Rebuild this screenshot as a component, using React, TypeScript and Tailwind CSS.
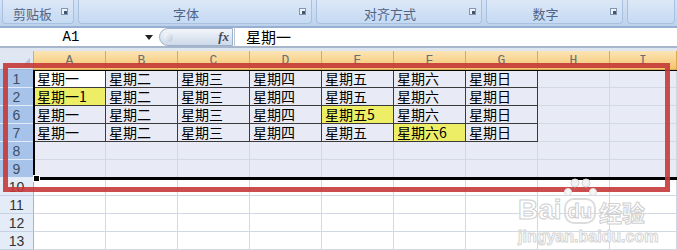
const COLS = ["A", "B", "C", "D", "E", "F", "G", "H", "I"];
const DAYS = ["星期一", "星期二", "星期三", "星期四", "星期五", "星期六", "星期日"];

type Row = { label: string; cells: string[]; yellow?: number; selected: boolean; data: boolean };

const rows: Row[] = [
    { label: "1", cells: DAYS, selected: true, data: true },
    { label: "2", cells: ["星期一1", ...DAYS.slice(1)], yellow: 0, selected: true, data: true },
    { label: "6", cells: [...DAYS.slice(0, 4), "星期五5", ...DAYS.slice(5)], yellow: 4, selected: true, data: true },
    { label: "7", cells: [...DAYS.slice(0, 5), "星期六6", DAYS[6]], yellow: 5, selected: true, data: true },
    { label: "8", cells: [], selected: true, data: false },
    { label: "9", cells: [], selected: true, data: false },
    { label: "10", cells: [], selected: false, data: false },
    { label: "11", cells: [], selected: false, data: false },
    { label: "12", cells: [], selected: false, data: false },
    { label: "13", cells: [], selected: false, data: false },
];

const groups = [
    { name: "剪贴板", w: "w-[72px]", justify: "justify-start pl-[10px]" },
    { name: "字体", w: "w-[234px]", justify: "justify-center pr-[18px]" },
    { name: "对齐方式", w: "w-[166px]", justify: "justify-center pr-[18px]" },
    { name: "数字", w: "w-[137px]", justify: "justify-center pr-[18px]" },
    { name: "", w: "flex-1", justify: "" },
];

const Launcher = () => (
    <span className="absolute right-[5px] top-[8px] w-[7px] h-[7px] border border-[#8296b4] bg-[#eef3fa]">
        <span className="absolute right-0 bottom-0 w-[3px] h-[3px] bg-[#44546e]" />
    </span>
);

export default function App() {
    return (
        <div className="relative w-[677px] h-[250px] overflow-hidden bg-white" style={{ fontFamily: '"Noto Sans CJK SC", "Liberation Sans", sans-serif' }}>
            {/* ribbon */}
            <div className="h-[28px] flex gap-[4px] px-[2px] bg-gradient-to-b from-[#d5e3f4] to-[#bed2ec] border-b-2 border-[#96afd2]">
                {groups.map((g, i) => (
                    <div
                        key={i}
                        className={`${g.w} relative h-[24px] rounded-b-[4px] border-x border-b border-[#a9c1e0] bg-gradient-to-b from-[#dce8f7] to-[#c6daf2] flex items-center ${g.justify}`}
                    >
                        <span className="text-[13px] text-[#4f6488] leading-none mt-[3px]">{g.name}</span>
                        {g.name && <Launcher />}
                    </div>
                ))}
            </div>

            {/* formula bar */}
            <div className="h-[20px] flex items-center bg-white border-b-2 border-[#a7b6cb]">
                <div className="w-[142px] text-center text-[14px] text-black" style={{ fontFamily: '"Liberation Mono", monospace' }}>A1</div>
                <svg width="8" height="5" className="ml-[3px]">
                    <polygon points="0,0 8,0 4,5" fill="#222" />
                </svg>
                <div className="ml-[6px] w-[74px] h-[18px] rounded-l-full border border-[#9db0cb] bg-gradient-to-b from-[#f3f6fb] to-[#cdd9ea] flex items-center justify-between pl-[4px] pr-[3px]">
                    <span className="w-[9px] h-[9px] rounded-full bg-gradient-to-br from-white to-[#b9c6d8]" />
                    <span className="text-[13px] italic font-bold text-[#404a5a]" style={{ fontFamily: '"Liberation Serif", serif' }}>fx</span>
                </div>
                <div className="h-[20px] border-l border-[#b9c5d6] ml-[1px] pl-[11px] text-[15px] text-black leading-[20px]">星期一</div>
            </div>

            <div className="h-[3px] bg-[#dfe6f0]" />

            {/* grid */}
            <div className="flex flex-col">
                <div className="flex h-[19px]">
                    <div className="w-[34px] shrink-0 bg-[#dfe7f2] border-r border-b border-[#9eb6ce] relative">
                        <svg width="8" height="8" className="absolute right-[3px] bottom-[3px]">
                            <polygon points="8,0 8,8 0,8" fill="#b4c3d6" />
                        </svg>
                    </div>
                    {COLS.map((c) => (
                        <div
                            key={c}
                            className={`${c === "I" ? "flex-1" : "w-[72px] shrink-0"} bg-gradient-to-b from-[#fbe5b6] to-[#f5c46a] border-r border-b border-[#d9a955] text-center text-[13px] leading-[19px] text-[#6a6d74]`}
                            style={{ fontFamily: '"Liberation Mono", monospace' }}
                        >
                            {c}
                        </div>
                    ))}
                </div>
                {rows.map((r) => (
                    <div key={r.label} className="flex h-[18px]">
                        <div
                            className={`w-[34px] shrink-0 border-r border-b text-center text-[14px] leading-[18px] ${r.selected ? "bg-[#a7c3ea] border-[#e2ebf7] border-r-[#8aa8d0] text-[#3d4e66]" : "bg-[#e4ecf7] border-[#c4d1e4] border-r-[#9eb6ce] text-[#333]"}`}
                            style={{ fontFamily: '"Liberation Sans", sans-serif' }}
                        >
                            {r.label}
                        </div>
                        {COLS.map((c, ci) => {
                            const inData = r.data && ci < 7;
                            const text = r.cells[ci];
                            const bg = r.yellow === ci && text
                                ? "bg-[#eeee66]"
                                : r.label === "1" && ci === 0
                                    ? "bg-white"
                                    : r.selected
                                        ? "bg-[#e8eaf5]"
                                        : "bg-white";
                            return (
                                <div
                                    key={c}
                                    className={`${c === "I" ? "flex-1" : "w-[72px] shrink-0"} ${bg} border-r border-b ${inData ? "border-[#3a3a3a]" : "border-[#d3d9e4]"} pl-[3px] text-[14px] leading-[17px] text-black whitespace-nowrap`}
                                >
                                    {text}
                                </div>
                            );
                        })}
                    </div>
                ))}
            </div>

            {/* selection outline + fill handle */}
            <div className="absolute left-[33px] top-[70px] w-[660px] h-[110px] border-l-2 border-t border-b-[3px] border-black pointer-events-none" />
            <div className="absolute left-[33px] top-[175px] w-[7px] h-[7px] bg-black border border-white" />

            {/* red annotation box */}
            <div className="absolute left-[3px] top-[63px] w-[667px] h-[129px] border-[5px] border-[#c53a3a]/90 pointer-events-none" />

            {/* watermark */}
            <div className="absolute left-[518px] top-[178px] pointer-events-none whitespace-nowrap">
                <svg width="34" height="22" className="absolute left-[46px] top-0">
                    <circle cx="11" cy="5" r="4" fill="#f2f2f2" stroke="#d5d5d5" />
                    <circle cx="22" cy="5" r="4" fill="#f2f2f2" stroke="#d5d5d5" />
                    <circle cx="4" cy="14" r="3.5" fill="#f6f6f6" stroke="#dedede" />
                    <circle cx="29" cy="14" r="3.5" fill="#f6f6f6" stroke="#dedede" />
                </svg>
                <div className="flex items-end pt-[18px] text-[28px] font-bold leading-none text-white/90" style={{ fontFamily: '"Liberation Sans", sans-serif', WebkitTextStroke: "1px #d0d0d0" }}>
                    <span>Bai</span>
                    <span className="ml-[2px] text-[20px] leading-[22px] rounded-[10px] border-2 border-[#dcdcdc] px-[2px]">du</span>
                    <span className="ml-[3px] text-[23px]" style={{ fontFamily: '"Noto Sans CJK SC", sans-serif' }}>经验</span>
                </div>
                <div className="mt-[5px] text-[16px] font-bold leading-none text-white/90" style={{ fontFamily: '"Liberation Sans", sans-serif', WebkitTextStroke: "1px #d6d6d6" }}>
                    jingyan.baidu.com
                </div>
            </div>
        </div>
    );
}
